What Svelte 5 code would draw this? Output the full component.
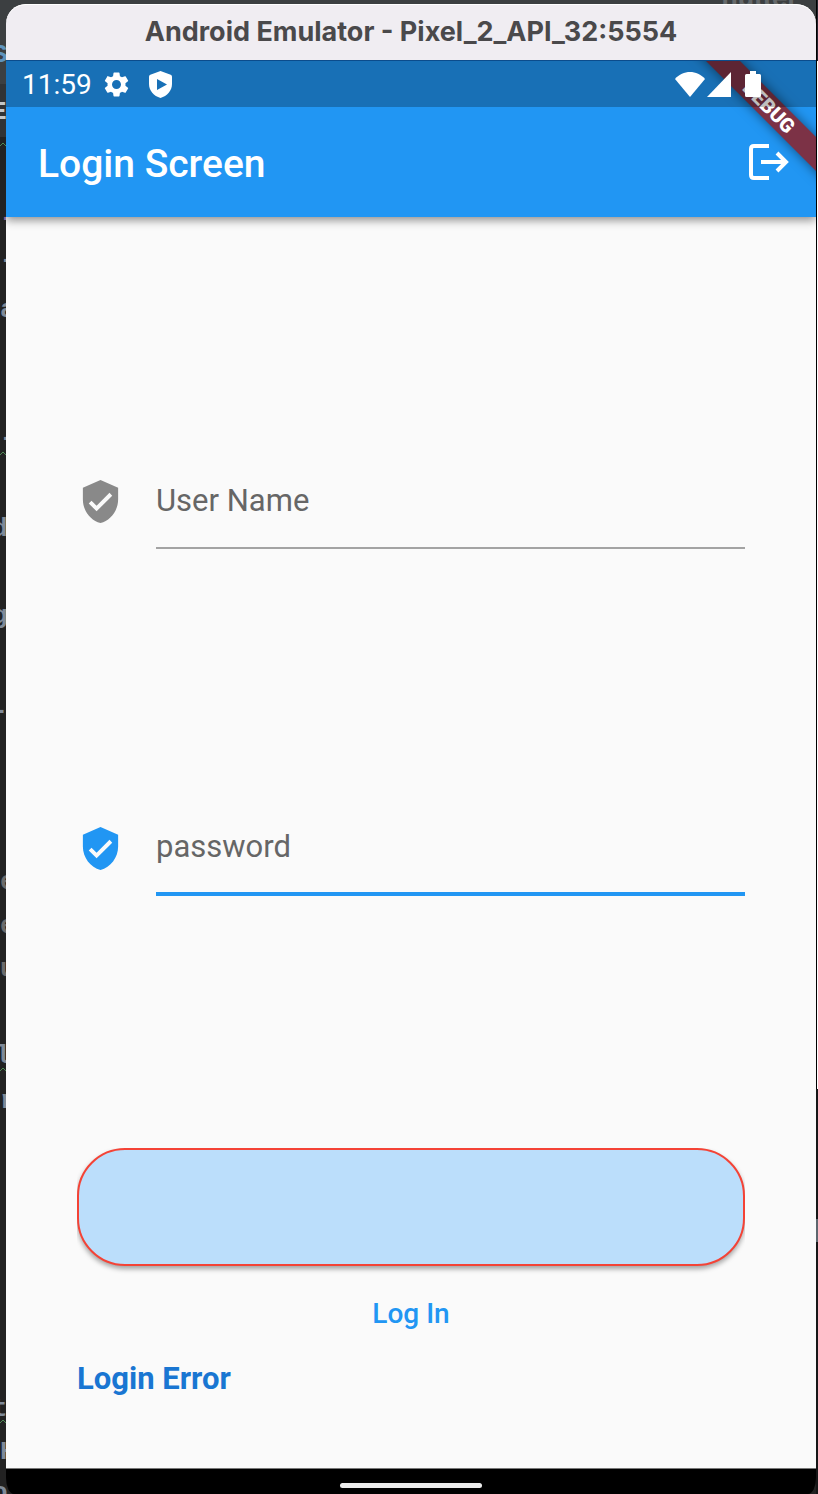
<script lang="ts">
  type Fragment = { text: string; top: number; kind: string };

  const fragments: Fragment[] = [
    { text: 'S', top: 41, kind: 'link' },
    { text: 'E', top: 98, kind: 'bright' },
    { text: '-', top: 204, kind: 'purple' },
    { text: '-', top: 246, kind: 'plain' },
    { text: 'a', top: 296, kind: 'plain' },
    { text: '-', top: 424, kind: 'plain' },
    { text: 'd', top: 515, kind: 'plain shifted' },
    { text: 'g', top: 602, kind: 'plain shifted' },
    { text: '-', top: 697, kind: 'plain shifted' },
    { text: 'e', top: 868, kind: 'muted' },
    { text: 'e', top: 912, kind: 'muted' },
    { text: 'u', top: 955, kind: 'muted' },
    { text: 'l', top: 1042, kind: 'plain stem' },
    { text: 'r', top: 1087, kind: 'plain' },
    { text: 't', top: 1395, kind: 'plain shifted' },
    { text: 'H', top: 1438, kind: 'plain' },
    { text: 'o', top: 1479, kind: 'plain shifted' }
  ];

  const squiggles = [142, 451, 1067, 1419];

  let username = $state('');
  let password = $state('');
</script>

{#snippet shield()}
  <svg class="shield" viewBox="0 0 24 24" aria-hidden="true">
    <path
      fill="currentColor"
      d="M12 1 3 5v6c0 5.55 3.84 10.74 9 12 5.16-1.26 9-6.45 9-12V5l-9-4zm-2 16-4-4 1.41-1.41L10 14.17l6.59-6.59L18 9l-8 8z"
    />
  </svg>
{/snippet}

<div class="desktop">
  <div class="editor" aria-hidden="true">
    <div class="tabs"><span>flutter</span></div>
    <div class="gutter">
      {#each fragments as f}
        <span class={f.kind} style:top="{f.top}px">{f.text}</span>
      {/each}
      {#each squiggles as top}
        <svg class="squiggle" style:top="{top}px" width="6" height="5" viewBox="0 0 6 5">
          <path d="M0 4 3 1l3 3" fill="none" stroke="currentColor" />
        </svg>
      {/each}
    </div>
    <div class="edge"><i></i></div>
  </div>

  <div class="window">
    <div class="titlebar">Android Emulator - Pixel_2_API_32:5554</div>

    <div class="screen">
      <header>
        <div class="statusbar">
          <span class="clock">11:59</span>
          <svg class="gear" viewBox="2 2 20 20" aria-hidden="true">
            <path
              fill="currentColor"
              d="M19.14 12.94c.04-.3.06-.61.06-.94 0-.32-.02-.64-.07-.94l2.03-1.58c.18-.14.23-.41.12-.61l-1.92-3.32c-.12-.22-.37-.29-.59-.22l-2.39.96c-.5-.38-1.03-.7-1.62-.94l-.36-2.54c-.04-.24-.24-.41-.48-.41h-3.84c-.24 0-.43.17-.47.41l-.36 2.54c-.59.24-1.13.57-1.62.94l-2.39-.96c-.22-.08-.47 0-.59.22L2.74 8.87c-.12.21-.08.47.12.61l2.03 1.58c-.05.3-.09.63-.09.94s.02.64.07.94l-2.03 1.58c-.18.14-.23.41-.12.61l1.92 3.32c.12.22.37.29.59.22l2.39-.96c.5.38 1.03.7 1.62.94l.36 2.54c.05.24.24.41.48.41h3.84c.24 0 .44-.17.47-.41l.36-2.54c.59-.24 1.13-.56 1.62-.94l2.39.96c.22.08.47 0 .59-.22l1.92-3.32c.12-.22.07-.47-.12-.61l-2.01-1.58zM12 15.6c-1.98 0-3.6-1.62-3.6-3.6s1.62-3.6 3.6-3.6 3.6 1.62 3.6 3.6-1.62 3.6-3.6 3.6z"
            />
          </svg>
          <svg class="guard" viewBox="0 0 23 27" aria-hidden="true">
            <path
              fill="currentColor"
              fill-rule="evenodd"
              d="M11.5 0 1.3 3.8Q0 4.3 0 5.7V13c0 6.6 4.8 12 11.5 14C18.2 25 23 19.6 23 13V5.7Q23 4.3 21.7 3.8ZM8 8v11l10-5.5Z"
            />
          </svg>
          <div class="signals">
            <svg width="30" height="25" viewBox="0 0 30 25" aria-hidden="true">
              <path fill="currentColor" d="M0 7C8-2.3 22-2.3 30 7L15 25Z" />
            </svg>
            <svg width="24" height="25" viewBox="0 0 24 25" aria-hidden="true">
              <path fill="currentColor" d="M24 0v25H0Z" />
            </svg>
            <svg class="battery" width="16" height="26" viewBox="0 0 16 26" aria-hidden="true">
              <path
                fill="currentColor"
                d="M5 0h6v3h3.5Q16 3 16 4.5v20Q16 26 14.5 26h-13Q0 26 0 24.5v-20Q0 3 1.5 3H5Z"
              />
            </svg>
          </div>
        </div>
        <div class="appbar">
          <h1>Login Screen</h1>
          <button class="logout" aria-label="Log out">
            <svg width="40" height="36" viewBox="0 0 40 36" fill="none" stroke="currentColor" stroke-width="4" aria-hidden="true">
              <path d="M20 2H5Q2 2 2 5v26q0 3 3 3h15" />
              <path d="M12 18h25" />
              <path d="m28 9 9 9-9 9" />
            </svg>
          </button>
        </div>
      </header>
      <div class="ribbon">DEBUG</div>

      <form onsubmit={(e) => e.preventDefault()}>
        <label class="field">
          {@render shield()}
          <input type="text" placeholder="User Name" aria-label="User Name" bind:value={username} />
        </label>
        <label class="field active">
          {@render shield()}
          <input type="password" placeholder="password" aria-label="password" bind:value={password} />
        </label>
        <div class="actions">
          <button class="pill" type="submit" aria-label="Submit"></button>
          <button class="login" type="button">Log In</button>
          <p>Login Error</p>
        </div>
      </form>
    </div>

    <div class="navbar"><span></span></div>
  </div>
</div>

<style>
  :global(body) {
    margin: 0;
    background: #222;
  }

  .desktop {
    position: relative;
    box-sizing: border-box;
    display: flex;
    min-height: 100vh;
    padding: 4px 2px 0 6px;
    overflow: hidden;
    background: #222;
    font-family: Roboto, sans-serif;
  }

  /* Code editor showing behind the emulator window */
  .editor {
    position: absolute;
    inset: 0;
    overflow: hidden;
    font: bold 26px/28px 'Liberation Mono', monospace;
  }

  .tabs {
    height: 137px;
    background: linear-gradient(#3c3f41 84px, #313335 84px);
  }

  .tabs span {
    position: absolute;
    top: -16px;
    right: 20px;
    color: #66696b;
    font: bold 26px/28px Inter, sans-serif;
  }

  .gutter span {
    position: absolute;
    left: 0;
    color: #7f8a98;
  }

  .gutter .shifted {
    left: -8px;
  }

  .gutter .stem {
    left: -5px;
  }

  .gutter .link {
    left: -8px;
    color: #5f94bd;
  }

  .gutter .bright {
    left: -9px;
    color: #c4c7c9;
  }

  .gutter .purple {
    color: #8c6a9c;
  }

  .gutter .muted {
    color: #6b6b6b;
  }

  .squiggle {
    position: absolute;
    left: 0;
    color: #4f8a55;
  }

  .edge {
    position: absolute;
    inset: 0 0 0 auto;
    width: 2px;
    background: linear-gradient(#25232e 61px, #fff 61px 1089px, #161617 1089px 1219px, #5d666e 1219px 1242px, #161617 1242px);
  }

  .edge i {
    display: block;
    width: 1px;
    height: 1089px;
    background: #000;
  }

  .window {
    position: relative;
    display: flex;
    flex: 1;
    flex-direction: column;
    min-width: 0;
  }

  .titlebar {
    display: flex;
    align-items: center;
    justify-content: center;
    height: 56px;
    border-radius: 20px 20px 0 0;
    background: #f0edf2;
    box-shadow: inset 0 1px #fff;
    color: #4a494b;
    font: 700 27px/54px Inter, sans-serif;
    white-space: nowrap;
  }

  .screen {
    position: relative;
    display: flex;
    flex: 1;
    flex-direction: column;
    overflow: hidden;
    background: #fafafa;
  }

  header {
    background: #2196f3;
    box-shadow: 0 3px 9px rgba(0, 0, 0, 0.45);
    color: #fff;
  }

  .statusbar {
    position: relative;
    z-index: 2;
    box-sizing: border-box;
    display: flex;
    align-items: center;
    height: 47px;
    padding: 0 55px 0 16px;
    border-top: 1px solid #0b4c8c;
    background: rgba(0, 0, 0, 0.25);
  }

  .clock {
    padding-top: 2px;
    font-size: 28px;
    line-height: 44px;
  }

  .gear {
    width: 25px;
    height: 25px;
    margin-left: 12px;
  }

  .guard {
    width: 23px;
    height: 27px;
    margin-left: 20px;
  }

  .signals {
    display: flex;
    align-items: center;
    gap: 2px;
    margin-left: auto;
  }

  .battery {
    margin-left: 12px;
  }

  .appbar {
    display: flex;
    align-items: center;
    justify-content: space-between;
    height: 110px;
    padding: 0 27px 0 32px;
  }

  h1 {
    margin: 0;
    padding-top: 4px;
    font-size: 39px;
    font-weight: 500;
    line-height: 48px;
  }

  button {
    padding: 0;
    border: 0;
    background: none;
    color: inherit;
    font: inherit;
    cursor: pointer;
  }

  .logout svg {
    display: block;
  }

  /* Diagonal banner over the top right corner */
  .ribbon {
    position: absolute;
    z-index: 1;
    top: 35px;
    right: -53px;
    width: 200px;
    background: #7c3246;
    box-shadow: 0 0 12px rgba(0, 0, 0, 0.5);
    color: #fff;
    font-size: 20px;
    font-weight: 900;
    line-height: 24px;
    text-align: center;
    transform: rotate(45deg);
  }

  form {
    display: flex;
    flex: 1;
    flex-direction: column;
    gap: 252px;
    padding: 237px 71px 48px;
  }

  .field {
    display: flex;
    align-items: center;
    gap: 32px;
    color: #898989;
  }

  .field.active {
    color: #2196f3;
  }

  .shield {
    flex: none;
    width: 47px;
    height: 47px;
  }

  input {
    box-sizing: border-box;
    flex: 1;
    min-width: 0;
    height: 95px;
    padding: 0;
    border: 0;
    border-bottom: 2px solid #a3a3a3;
    border-radius: 0;
    outline: 0;
    background: none;
    color: #212121;
    font: 31px/40px Roboto, sans-serif;
  }

  .active input {
    border-bottom: 4px solid #2196f3;
  }

  input::placeholder {
    color: #666;
    opacity: 1;
  }

  .actions {
    display: flex;
    flex-direction: column;
  }

  .pill {
    height: 118px;
    border: 2px solid #f44336;
    border-radius: 48px;
    background: #bbdefb;
    box-shadow: 0 3px 5px rgba(0, 0, 0, 0.35);
    clip-path: inset(0 0 -16px 0);
  }

  .login {
    align-self: center;
    margin-top: 32px;
    color: #2196f3;
    font-size: 28px;
    font-weight: 500;
    line-height: 32px;
  }

  p {
    margin: 29px 0 0;
    color: #1976d2;
    font-size: 31px;
    font-weight: 700;
    line-height: 40px;
  }

  .navbar {
    box-sizing: border-box;
    display: flex;
    justify-content: center;
    height: 26px;
    padding-top: 14px;
    border-top: 1px solid #777;
    border-radius: 0 0 8px 8px / 0 0 16px 16px;
    background: #000;
  }

  .navbar span {
    width: 142px;
    height: 5px;
    border-radius: 3px;
    background: #ececec;
  }
</style>
